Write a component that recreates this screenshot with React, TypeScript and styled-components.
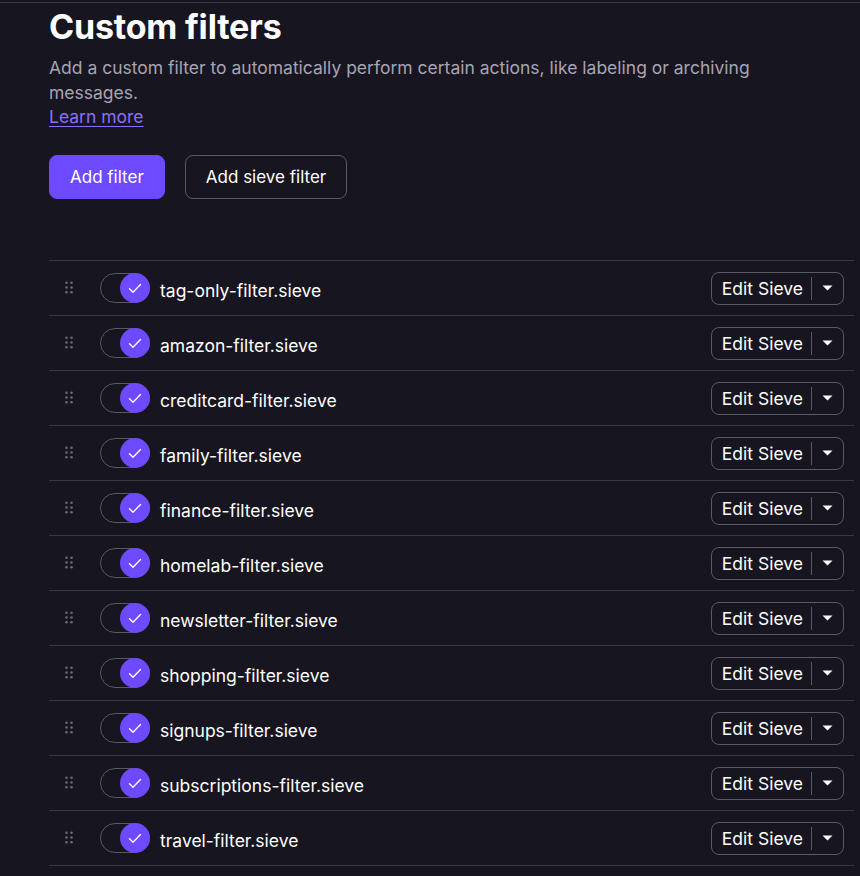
import styled, { createGlobalStyle } from 'styled-components';

const GlobalStyle = createGlobalStyle`
  html, body {
    margin: 0;
    padding: 0;
    background: #17151f;
  }
  body {
    font-family: Inter, 'Noto Sans', sans-serif;
    color: #ffffff;
  }
`;

const filters = [
  'tag-only-filter.sieve',
  'amazon-filter.sieve',
  'creditcard-filter.sieve',
  'family-filter.sieve',
  'finance-filter.sieve',
  'homelab-filter.sieve',
  'newsletter-filter.sieve',
  'shopping-filter.sieve',
  'signups-filter.sieve',
  'subscriptions-filter.sieve',
  'travel-filter.sieve',
];

export default function App() {
  return (
    <>
      <GlobalStyle />
      <Page>
        <Section>
          <Title>Custom filters</Title>
          <Description>
            Add a custom filter to automatically perform certain actions, like labeling or archiving
            messages.
          </Description>
          <LearnMore href="#">Learn more</LearnMore>
          <Actions>
            <Button $primary>Add filter</Button>
            <Button>Add sieve filter</Button>
          </Actions>
          <Table>
            {filters.map((name) => (
              <Row key={name}>
                <Handle>
                  <svg width="8" height="13" viewBox="0 0 8 13">
                    {[0, 1].map((c) =>
                      [0, 1, 2].map((r) => (
                        <circle key={`${c}${r}`} cx={1.5 + c * 5} cy={1.8 + r * 4.7} r="1.3" fill="#6b6878" />
                      ))
                    )}
                  </svg>
                </Handle>
                <Toggle>
                  <Knob>
                    <svg width="14" height="11" viewBox="0 0 14 11">
                      <path d="M1.5 5.8 L5 9.2 L12.5 1.6" stroke="#fff" strokeWidth="1.4" fill="none" strokeLinecap="round" strokeLinejoin="round" />
                    </svg>
                  </Knob>
                </Toggle>
                <Name>{name}</Name>
                <SplitButton>
                  <SplitMain>Edit Sieve</SplitMain>
                  <SplitDivider />
                  <SplitCaret>
                    <svg width="11" height="6" viewBox="0 0 11 6">
                      <path d="M0.5 0.5 H10.5 L5.5 5.5 Z" fill="#fff" />
                    </svg>
                  </SplitCaret>
                </SplitButton>
              </Row>
            ))}
          </Table>
        </Section>
      </Page>
    </>
  );
}

const Page = styled.div`
  border-top: 1px solid #3a3845;
  margin-top: 2px;
  min-height: 874px;
`;

const Section = styled.div`
  padding: 0 6px 0 49px;
`;

const Title = styled.h1`
  margin: 3px 0 0;
  font-size: 34px;
  line-height: 42px;
  font-weight: 700;
  letter-spacing: -0.2px;
`;

const Description = styled.p`
  margin: 8px 0 0;
  font-size: 17.5px;
  line-height: 24.5px;
  color: #a7a4b5;
  max-width: 730px;
`;

const LearnMore = styled.a`
  display: inline-block;
  font-size: 17.5px;
  line-height: 24.5px;
  color: #8a6eff;
  text-decoration: underline;
  text-underline-offset: 3px;
`;

const Actions = styled.div`
  display: flex;
  gap: 20px;
  margin-top: 25px;
`;

const Button = styled.button<{ $primary?: boolean }>`
  height: 44px;
  padding: 0 20px;
  border-radius: 8px;
  font-family: Inter, 'Noto Sans', sans-serif;
  font-size: 17px;
  color: #fff;
  cursor: pointer;
  background: ${(p) => (p.$primary ? '#6d4aff' : 'transparent')};
  border: 1px solid ${(p) => (p.$primary ? '#6d4aff' : '#5b5867')};
`;

const Table = styled.div`
  margin-top: 61px;
  border-top: 1px solid #3a3845;
`;

const Row = styled.div`
  display: flex;
  align-items: center;
  height: 54px;
  border-bottom: 1px solid #3a3845;
`;

const Handle = styled.div`
  width: 51px;
  display: flex;
  justify-content: flex-start;
  padding-left: 16px;
  box-sizing: border-box;
`;

const Toggle = styled.div`
  position: relative;
  width: 48px;
  height: 28px;
  border: 1px solid #5b5867;
  border-radius: 15px;
  display: flex;
  justify-content: flex-end;
  align-items: center;
  margin-top: 1px;
`;

const Knob = styled.div`
  width: 30px;
  height: 30px;
  border-radius: 50%;
  background: #6d4aff;
  display: flex;
  align-items: center;
  justify-content: center;
  margin-right: -1px;
`;

const Name = styled.div`
  flex: 1;
  margin-left: 10px;
  margin-top: 5px;
  font-size: 17.5px;
  color: #fff;
`;

const SplitButton = styled.div`
  display: flex;
  align-items: center;
  height: 31px;
  border: 1px solid #5b5867;
  border-radius: 8px;
  margin-right: 10px;
  margin-top: 1px;
`;

const SplitMain = styled.div`
  padding: 0 8px 0 10px;
  font-size: 17.5px;
  line-height: 31px;
  color: #fff;
`;

const SplitDivider = styled.div`
  width: 1px;
  height: 23px;
  background: #5b5867;
`;

const SplitCaret = styled.div`
  width: 31px;
  display: flex;
  justify-content: center;
  align-items: center;
`;
